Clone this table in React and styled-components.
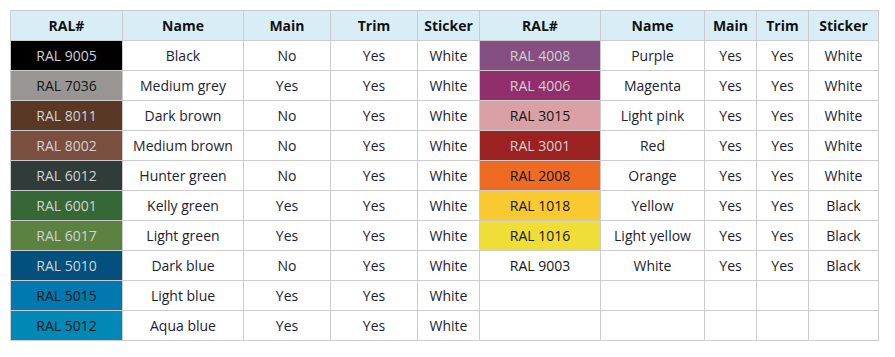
import React from 'react';
import styled, { createGlobalStyle } from 'styled-components';

const GlobalStyle = createGlobalStyle`
  body {
    margin: 0;
    background: #fff;
    font-family: 'Open Sans', 'Liberation Sans', sans-serif;
  }
`;

const Wrap = styled.div`
  padding: 10px 0 0 10px;
`;

const Table = styled.table`
  border-collapse: collapse;
  table-layout: fixed;
  width: 869px;
  font-size: 14px;
  color: #1c2230;
`;

const HeadCell = styled.th`
  background: #d9edf7;
  border: 1px solid #cccccc;
  font-weight: 700;
  color: #111;
  text-align: center;
  padding: 0;
  height: 29px;
`;

const Cell = styled.td`
  border: 1px solid #cccccc;
  text-align: center;
  padding: 0;
  height: 29px;
  white-space: nowrap;
`;

const Swatch = styled(Cell)`
  background: ${(p) => p.$bg || '#fff'};
  color: ${(p) => (p.$light ? '#d2d2d2' : '#141414')};
`;

const widths = [112, 121, 87, 87, 62, 121, 104, 52, 52, 70];

const left = [
  ['RAL 9005', '#000000', true, 'Black', 'No', 'Yes', 'White'],
  ['RAL 7036', '#999593', false, 'Medium grey', 'Yes', 'Yes', 'White'],
  ['RAL 8011', '#5a3826', true, 'Dark brown', 'No', 'Yes', 'White'],
  ['RAL 8002', '#7b4f40', true, 'Medium brown', 'No', 'Yes', 'White'],
  ['RAL 6012', '#2f3c39', true, 'Hunter green', 'No', 'Yes', 'White'],
  ['RAL 6001', '#366837', true, 'Kelly green', 'Yes', 'Yes', 'White'],
  ['RAL 6017', '#5c8241', true, 'Light green', 'Yes', 'Yes', 'White'],
  ['RAL 5010', '#01507e', true, 'Dark blue', 'No', 'Yes', 'White'],
  ['RAL 5015', '#0079b0', false, 'Light blue', 'Yes', 'Yes', 'White'],
  ['RAL 5012', '#0089b7', false, 'Aqua blue', 'Yes', 'Yes', 'White'],
];

const right = [
  ['RAL 4008', '#864f82', true, 'Purple', 'Yes', 'Yes', 'White'],
  ['RAL 4006', '#912f6c', true, 'Magenta', 'Yes', 'Yes', 'White'],
  ['RAL 3015', '#d9a1a6', false, 'Light pink', 'Yes', 'Yes', 'White'],
  ['RAL 3001', '#9c2121', true, 'Red', 'Yes', 'Yes', 'White'],
  ['RAL 2008', '#ed6b22', false, 'Orange', 'Yes', 'Yes', 'White'],
  ['RAL 1018', '#f9c930', false, 'Yellow', 'Yes', 'Yes', 'Black'],
  ['RAL 1016', '#efdd38', false, 'Light yellow', 'Yes', 'Yes', 'Black'],
  ['RAL 9003', '#ffffff', false, 'White', 'Yes', 'Yes', 'Black'],
  null,
  null,
];

const heads = ['RAL#', 'Name', 'Main', 'Trim', 'Sticker'];

function Half({ row }) {
  if (!row) {
    return (
      <>
        <Cell />
        <Cell />
        <Cell />
        <Cell />
        <Cell />
      </>
    );
  }
  const [code, bg, light, name, main, trim, sticker] = row;
  return (
    <>
      <Swatch $bg={bg} $light={light}>
        {code}
      </Swatch>
      <Cell>{name}</Cell>
      <Cell>{main}</Cell>
      <Cell>{trim}</Cell>
      <Cell>{sticker}</Cell>
    </>
  );
}

export default function App() {
  return (
    <Wrap>
      <GlobalStyle />
      <Table>
        <colgroup>
          {widths.map((w, i) => (
            <col key={i} style={{ width: w }} />
          ))}
        </colgroup>
        <thead>
          <tr>
            {[...heads, ...heads].map((h, i) => (
              <HeadCell key={i}>{h}</HeadCell>
            ))}
          </tr>
        </thead>
        <tbody>
          {left.map((row, i) => (
            <tr key={i}>
              <Half row={row} />
              <Half row={right[i]} />
            </tr>
          ))}
        </tbody>
      </Table>
    </Wrap>
  );
}
